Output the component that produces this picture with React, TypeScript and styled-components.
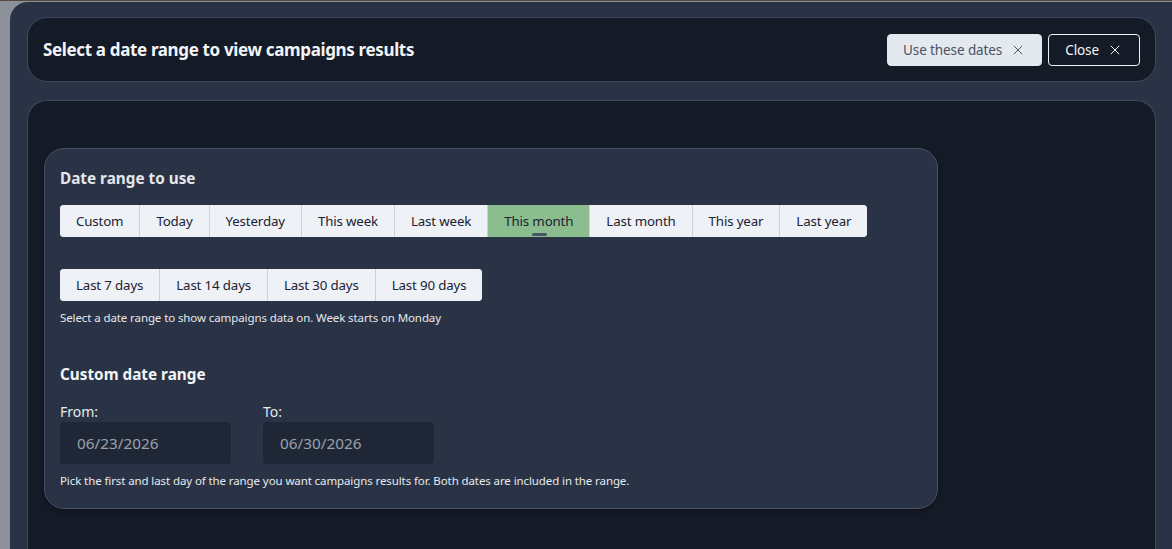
import styled, { createGlobalStyle } from "styled-components";
import { X } from "lucide-react";

const presets = [
  "Custom",
  "Today",
  "Yesterday",
  "This week",
  "Last week",
  "This month",
  "Last month",
  "This year",
  "Last year",
];

const rolling = ["Last 7 days", "Last 14 days", "Last 30 days", "Last 90 days"];

const Global = createGlobalStyle`
  html, body {
    margin: 0;
    height: 100%;
    overflow: hidden;
  }
  body {
    background: #8c9098;
    font-family: "Segoe UI", "Noto Sans", sans-serif;
  }
  #root {
    height: 100%;
  }
`;

const App = () => {
  const active = "This month";

  return (
    <>
      <Global />
      <Page>
        <Modal>
          <Header>
            <Title>Select a date range to view campaigns results</Title>
            <Actions>
              <ActionButton $primary>
                <span>Use these dates</span>
                <X size={16} strokeWidth={1.5} />
              </ActionButton>
              <ActionButton>
                <span>Close</span>
                <X size={16} strokeWidth={1.5} />
              </ActionButton>
            </Actions>
          </Header>

          <Body>
            <Card>
              <SectionTitle>Date range to use</SectionTitle>
              <Segmented>
                {presets.map((p) => (
                  <Segment key={p} $active={p === active}>
                    {p}
                    {p === active && <Indicator />}
                  </Segment>
                ))}
              </Segmented>

              <Segmented $second>
                {rolling.map((p) => (
                  <Segment key={p}>{p}</Segment>
                ))}
              </Segmented>
              <Hint>
                Select a date range to show campaigns data on. Week starts on
                Monday
              </Hint>

              <SectionTitle $custom>Custom date range</SectionTitle>
              <Fields>
                <Field>
                  <Label>From:</Label>
                  <DateInput>06/23/2026</DateInput>
                </Field>
                <Field>
                  <Label>To:</Label>
                  <DateInput>06/30/2026</DateInput>
                </Field>
              </Fields>
              <Hint>
                Pick the first and last day of the range you want campaigns
                results for. Both dates are included in the range.
              </Hint>
            </Card>
          </Body>
        </Modal>
      </Page>
    </>
  );
};

export default App;

const Page = styled.div`
  height: 100%;
  display: flex;
  padding: 1px 0 0 10px;
  box-sizing: border-box;
  border-top: 1px solid #5a4a3e;
`;

const Modal = styled.div`
  flex: 1;
  display: flex;
  flex-direction: column;
  gap: 18px;
  background: #2a3345;
  border-top-left-radius: 18px;
  padding: 15px 16px 0 17px;
`;

const Header = styled.div`
  height: 65px;
  box-sizing: border-box;
  display: flex;
  align-items: center;
  justify-content: space-between;
  padding: 0 15px 0 15px;
  background: #141a26;
  border: 1px solid #3f495b;
  border-radius: 20px;
`;

const Title = styled.h1`
  margin: 0;
  font-size: 17px;
  letter-spacing: -0.35px;
  font-weight: 700;
  color: #f2f4f7;
`;

const Actions = styled.div`
  display: flex;
  gap: 6px;
`;

const ActionButton = styled.button<{ $primary?: boolean }>`
  height: 32px;
  display: flex;
  align-items: center;
  gap: 8px;
  padding: 0 ${(p) => (p.$primary ? "15px" : "16px")};
  font-family: inherit;
  font-size: 13.5px;
  letter-spacing: -0.1px;
  border-radius: 4px;
  cursor: pointer;
  background: ${(p) => (p.$primary ? "#e4e8ef" : "transparent")};
  color: ${(p) => (p.$primary ? "#4b5262" : "#f5f6f8")};
  border: 1px solid ${(p) => (p.$primary ? "#e4e8ef" : "#f0f2f5")};
`;

const Body = styled.div`
  flex: 1;
  background: #141a26;
  border: 1px solid #3f495b;
  border-bottom: none;
  border-radius: 20px 20px 0 0;
  padding: 47px 16px 0;
`;

const Card = styled.div`
  width: 894px;
  box-sizing: border-box;
  background: #2a3345;
  border: 1px solid #465166;
  border-radius: 20px;
  padding: 19px 15px 19px;
  box-shadow: 0 2px 4px rgba(0, 0, 0, 0.3);
  color: #e8ebf0;
`;

const SectionTitle = styled.h2<{ $custom?: boolean }>`
  margin: ${(p) => (p.$custom ? "36px 0 17px" : "0 0 17px")};
  font-size: 15.3px;
  line-height: ${(p) => (p.$custom ? "24px" : "20px")};
  font-weight: 700;
  color: ${(p) => (p.$custom ? "#f2f4f7" : "#e3e7ed")};
`;

const Segmented = styled.div<{ $second?: boolean }>`
  display: inline-flex;
  margin-top: ${(p) => (p.$second ? "32px" : "0")};
  border-radius: 4px;
  overflow: hidden;
  background: #eef1f6;
  vertical-align: top;
`;

const Segment = styled.div<{ $active?: boolean }>`
  position: relative;
  height: 32px;
  display: flex;
  align-items: center;
  padding: 0 16px;
  font-size: 13.3px;
  letter-spacing: -0.15px;
  color: #1b2233;
  background: ${(p) => (p.$active ? "#8bbd8e" : "#eef1f6")};
  border-left: 1px solid #cdd2da;

  &:first-child {
    border-left: none;
  }
`;

const Indicator = styled.span`
  position: absolute;
  left: 50%;
  bottom: 1px;
  width: 15px;
  height: 3px;
  margin-left: -7px;
  border-radius: 2px;
  background: #4a5466;
`;

const Hint = styled.p`
  margin: 9px 0 0;
  font-size: 11.5px;
  letter-spacing: -0.1px;
  line-height: 16px;
  color: #e6e9ee;
`;

const Fields = styled.div`
  display: flex;
  gap: 32px;
`;

const Field = styled.div`
  display: flex;
  flex-direction: column;
  gap: 1px;
`;

const Label = styled.span`
  font-size: 14px;
  line-height: 18px;
  color: #e6e9ee;
`;

const DateInput = styled.div`
  width: 171px;
  height: 42px;
  box-sizing: border-box;
  display: flex;
  align-items: center;
  padding-left: 17px;
  border-radius: 4px;
  background: #1f2737;
  color: #9aa1ac;
  font-size: 15.3px;
`;
